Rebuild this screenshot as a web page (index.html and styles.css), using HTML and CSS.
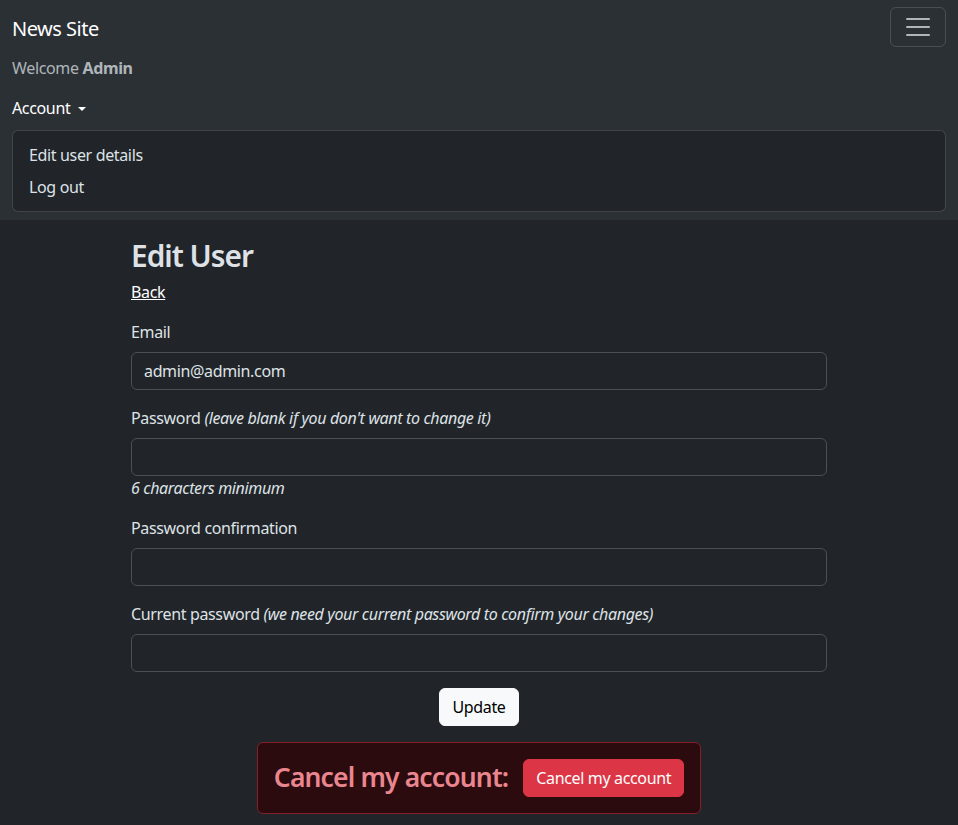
FILE: index.html
```html
<!DOCTYPE html>
<html lang="en">
<head>
<meta charset="utf-8">
<title>News Site</title>
<link rel="stylesheet" href="styles.css">
</head>
<body>
<nav class="navbar">
  <div class="nav-container">
    <div class="nav-top">
      <a class="brand" href="#">News Site</a>
      <button class="toggler" type="button" aria-label="Toggle navigation">
        <svg width="30" height="30" viewBox="0 0 30 30" aria-hidden="true">
          <path d="M4 7h22M4 15h22M4 23h22" stroke="rgba(222,226,230,0.75)" stroke-width="2" stroke-linecap="round" fill="none"/>
        </svg>
      </button>
    </div>
    <ul class="nav-list">
      <li class="nav-text">Welcome <strong>Admin</strong></li>
      <li class="dropdown">
        <a class="nav-link dropdown-toggle" href="#">Account</a>
        <ul class="dropdown-menu">
          <li><a class="dropdown-item" href="#">Edit user details</a></li>
          <li><a class="dropdown-item" href="#">Log out</a></li>
        </ul>
      </li>
    </ul>
  </div>
</nav>

<main class="container">
  <h2 class="page-title">Edit User</h2>
  <p class="back"><a href="#">Back</a></p>

  <form class="form">
    <div class="field">
      <label class="label" for="email">Email</label>
      <input class="input" id="email" type="email" value="admin@admin.com">
    </div>
    <div class="field">
      <label class="label" for="pw">Password <i>(leave blank if you don't want to change it)</i></label>
      <input class="input" id="pw" type="password">
      <em class="hint">6 characters minimum</em>
    </div>
    <div class="field">
      <label class="label" for="pwc">Password confirmation</label>
      <input class="input" id="pwc" type="password">
    </div>
    <div class="field">
      <label class="label" for="cpw">Current password <i>(we need your current password to confirm your changes)</i></label>
      <input class="input" id="cpw" type="password">
    </div>
    <div class="actions">
      <button class="btn btn-light" type="button">Update</button>
    </div>
  </form>

  <div class="danger-box">
    <h3 class="danger-title">Cancel my account:</h3>
    <button class="btn btn-danger" type="button">Cancel my account</button>
  </div>
</main>
</body>
</html>
```

FILE: styles.css
```css
* { box-sizing: border-box; }

html, body {
  margin: 0;
  padding: 0;
}

body {
  background: #212529;
  color: #dee2e6;
  font-family: "Noto Sans", "Open Sans", sans-serif;
  font-size: 16px;
  line-height: 1.5;
  letter-spacing: -0.35px;
  min-height: 825px;
}

a { color: inherit; }

/* Navbar */
.navbar {
  background: #2b3035;
  padding: 8px 0;
}

.nav-container {
  padding: 0 12px;
}

.nav-top {
  display: flex;
  align-items: center;
  justify-content: space-between;
}

.brand {
  color: #fff;
  font-size: 20px;
  line-height: 30px;
  padding: 6px 0 4px;
  letter-spacing: -0.5px;
  text-decoration: none;
}

.toggler {
  display: flex;
  align-items: center;
  justify-content: center;
  width: 56px;
  height: 40px;
  padding: 4px 12px;
  background: transparent;
  border: 1px solid rgba(255, 255, 255, 0.15);
  border-radius: 6px;
  margin-top: -2px;
}

.nav-list {
  list-style: none;
  margin: 0;
  padding: 0;
}

.nav-text {
  padding: 8px 0;
  color: rgba(222, 226, 230, 0.75);
}

.nav-text strong { font-weight: 700; }

.nav-link {
  display: inline-block;
  padding: 8px 0;
  color: #fff;
  text-decoration: none;
}

.dropdown-toggle::after {
  content: "";
  display: inline-block;
  margin-left: 0.45em;
  vertical-align: 0.2em;
  border-top: 0.3em solid;
  border-right: 0.3em solid transparent;
  border-left: 0.3em solid transparent;
}

.dropdown-menu {
  list-style: none;
  margin: 2px 0 0;
  padding: 8px 0;
  background: #212529;
  border: 1px solid rgba(255, 255, 255, 0.15);
  border-radius: 6px;
}

.dropdown-item {
  display: block;
  padding: 4px 16px;
  color: #dee2e6;
  text-decoration: none;
}

/* Main */
.container {
  max-width: 720px;
  margin: 0 auto;
  padding: 18px 12px 0;
}

.page-title {
  margin: 0 0 6px;
  font-size: 29.8px;
  font-weight: 600;
  line-height: 1.2;
  letter-spacing: -1px;
  color: #dee2e6;
}

.back {
  margin: 0 0 16px;
}

.back a {
  color: #fff;
  text-decoration: underline;
}

.form {
  margin: 0;
}

.field {
  margin-bottom: 16px;
}

.label {
  display: block;
  margin-bottom: 8px;
}

.input {
  display: block;
  width: 100%;
  height: 38px;
  padding: 6px 12px;
  font: inherit;
  letter-spacing: inherit;
  color: #dee2e6;
  background: #212529;
  border: 1px solid #495057;
  border-radius: 6px;
}

.hint {
  display: block;
}

.actions {
  display: flex;
  justify-content: center;
  margin-bottom: 16px;
}

.btn {
  font: inherit;
  letter-spacing: inherit;
  line-height: 24px;
  padding: 6px 12px;
  border-radius: 6px;
  border: 1px solid transparent;
}

.btn-light {
  background: #f8f9fa;
  border-color: #f8f9fa;
  color: #000;
}

.btn-danger {
  background: #dc3545;
  border-color: #dc3545;
  color: #fff;
}

.danger-box {
  display: flex;
  align-items: center;
  gap: 15px;
  width: fit-content;
  margin: 0 auto;
  padding: 16px;
  background: #2c0b0e;
  border: 1px solid #842029;
  border-radius: 6px;
}

.danger-title {
  margin: 0;
  font-size: 26.5px;
  font-weight: 600;
  line-height: 1.2;
  letter-spacing: -0.85px;
  color: #ea868f;
}
```
